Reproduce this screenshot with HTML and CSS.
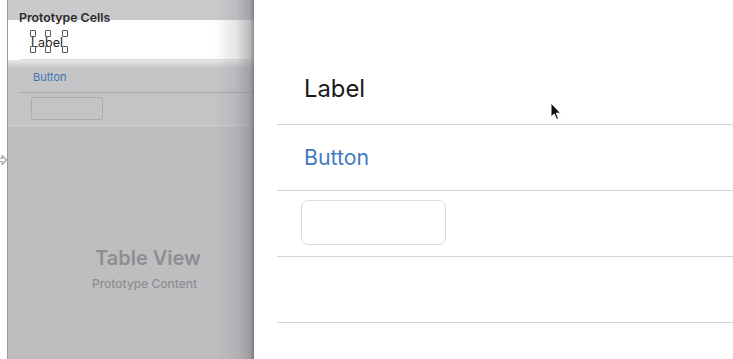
FILE: index.html
```html
<!DOCTYPE html>
<html>
<head>
<meta charset="utf-8">
<link rel="stylesheet" href="styles.css">
</head>
<body>
<div class="screen">
  <div class="gutter">
    <svg class="arrow" width="8" height="12" viewBox="0 0 8 12">
      <path d="M-4 4.5 H2 V1.5 L6.5 6 L2 10.5 V7.5 H-4 Z" fill="none" stroke="#a4a4a8" stroke-width="1.2" stroke-linejoin="round"/>
    </svg>
  </div>
  <div class="panel">
    <div class="panel-head">Prototype Cells</div>
    <div class="cell cell-label">
      <div class="label-sel">
        <span class="lbl">Label</span>
        <span class="h h1"></span><span class="h h2"></span><span class="h h3"></span>
        <span class="h h4"></span><span class="h h5"></span><span class="h h6"></span>
      </div>
    </div>
    <div class="cell cell-button"><span class="btn-small">Button</span></div>
    <div class="cell cell-field"><div class="field-small"></div></div>
    <div class="panel-body">
      <div class="tv-title">Table View</div>
      <div class="tv-sub">Prototype Content</div>
    </div>
    <div class="edge-shade"></div>
  </div>
  <div class="preview">
    <div class="top-space"></div>
    <div class="row row-label"><span class="big-label">Label</span></div>
    <div class="row row-button"><span class="big-button">Button</span></div>
    <div class="row row-field"><div class="big-field"></div></div>
    <div class="row row-empty"></div>
    <svg class="cursor" width="12" height="19" viewBox="0 0 12 19">
      <path d="M1 1 L1 15 L4.2 12 L6.6 17.4 L8.6 16.5 L6.3 11.2 L10.6 11.2 Z" fill="#111" stroke="#fff" stroke-width="1"/>
    </svg>
  </div>
</div>
</body>
</html>
```
FILE: styles.css
```css
html, body {
  margin: 0;
  padding: 0;
  background: #fff;
}
.screen {
  display: flex;
  width: 733px;
  height: 359px;
  overflow: hidden;
  font-family: "Inter", "Roboto", "Liberation Sans", sans-serif;
}
.gutter {
  width: 7px;
  flex: none;
  background: #fff;
  position: relative;
}
.arrow {
  position: absolute;
  left: 0;
  top: 154px;
}
.panel {
  width: 247px;
  flex: none;
  position: relative;
  display: flex;
  flex-direction: column;
  background: #bebdc0;
  border-left: 1px solid #9a9a9e;
  box-sizing: border-box;
}
.panel-head {
  height: 20px;
  background: #cacacd;
  font-size: 12.3px;
  font-weight: 600;
  color: #2c2c2e;
  padding-left: 11px;
  padding-top: 11px;
  line-height: 13px;
  box-sizing: border-box;
  position: relative;
  z-index: 1;
}
.cell {
  margin-left: 12px;
  border-bottom: 1px solid #a9a9ad;
  box-sizing: border-box;
}
.cell-label {
  height: 40px;
  background: #fff;
  margin-left: 0;
  padding-left: 12px;
  border-bottom: none;
  position: relative;
}
.cell-label::after {
  content: "";
  position: absolute;
  left: 12px;
  right: 0;
  bottom: 0;
  height: 1px;
  background: #dcdcde;
}
.label-sel {
  position: relative;
  margin-left: 10px;
  padding-top: 16px;
  width: 38px;
  height: 40px;
  box-sizing: border-box;
}
.lbl {
  font-size: 12.5px;
  color: #222;
  line-height: 13px;
  display: block;
  margin-left: 1px;
}
.h {
  position: absolute;
  width: 4px;
  height: 5px;
  border: 1px solid #555;
  background: #fff;
  border-radius: 1px;
}
.h1 { left: 0; top: 10px; }
.h2 { left: 15px; top: 10px; }
.h3 { left: 32px; top: 10px; }
.h4 { left: 0; top: 26px; }
.h5 { left: 15px; top: 26px; }
.h6 { left: 32px; top: 26px; }
.cell-button {
  height: 33px;
  display: flex;
  align-items: center;
  background: linear-gradient(#e9e9eb 0, #c6c6c9 8px, #c4c4c7 100%);
  margin-left: 0;
  padding-left: 25px;
  position: relative;
  border-bottom: none;
}
.cell-button::after {
  content: "";
  position: absolute;
  left: 12px;
  right: 0;
  bottom: 0;
  height: 1px;
  background: #a9a9ad;
}
.btn-small {
  font-size: 11px;
  color: #3f73b0;
  margin-top: 0;
}
.cell-field {
  height: 33px;
  margin-left: 0;
  padding-left: 23px;
  padding-top: 4px;
  background: #c4c4c7;
  border-bottom: 1px solid #d2d2d5;
}
.field-small {
  width: 72px;
  height: 23px;
  border: 1px solid #acacaf;
  border-radius: 2px;
  box-sizing: border-box;
}
.panel-body {
  flex: 1;
  display: flex;
  flex-direction: column;
  padding-top: 120px;
  padding-left: 51px;
  box-sizing: border-box;
  align-items: flex-start;
}
.tv-title {
  font-size: 20px;
  font-weight: 600;
  color: #8e8e91;
  line-height: 24px;
  margin-left: 36px;
}
.tv-sub {
  font-size: 12px;
  font-weight: 500;
  color: #8e8e91;
  margin-top: 6px;
  margin-left: 33px;
}
.edge-shade {
  position: absolute;
  top: 0;
  right: 0;
  width: 40px;
  height: 100%;
  background: linear-gradient(90deg, rgba(150,150,155,0) 0%, rgba(150,150,155,0.25) 55%, rgba(130,130,135,0.55) 90%, rgba(110,110,115,0.8) 100%);
  pointer-events: none;
  z-index: 2;
}
.preview {
  flex: 1;
  position: relative;
  display: flex;
  flex-direction: column;
  background: #fff;
}
.top-space {
  height: 59px;
  flex: none;
}
.row {
  height: 66px;
  flex: none;
  margin-left: 23px;
  padding-left: 27px;
  border-bottom: 1px solid #d4d4d6;
  box-sizing: border-box;
  display: flex;
  align-items: center;
}
.big-label {
  font-size: 23.8px;
  color: #1a1a1a;
  margin-top: -7px;
}
.big-button {
  font-size: 21.3px;
  color: #3f7cc0;
  margin-top: -1px;
}
.row-field {
  padding-left: 24px;
}
.big-field {
  width: 145px;
  height: 45px;
  border: 1px solid #dcdcde;
  border-radius: 7px;
  box-sizing: border-box;
  margin-top: -3px;
}
.cursor {
  position: absolute;
  left: 296px;
  top: 102px;
}
```
